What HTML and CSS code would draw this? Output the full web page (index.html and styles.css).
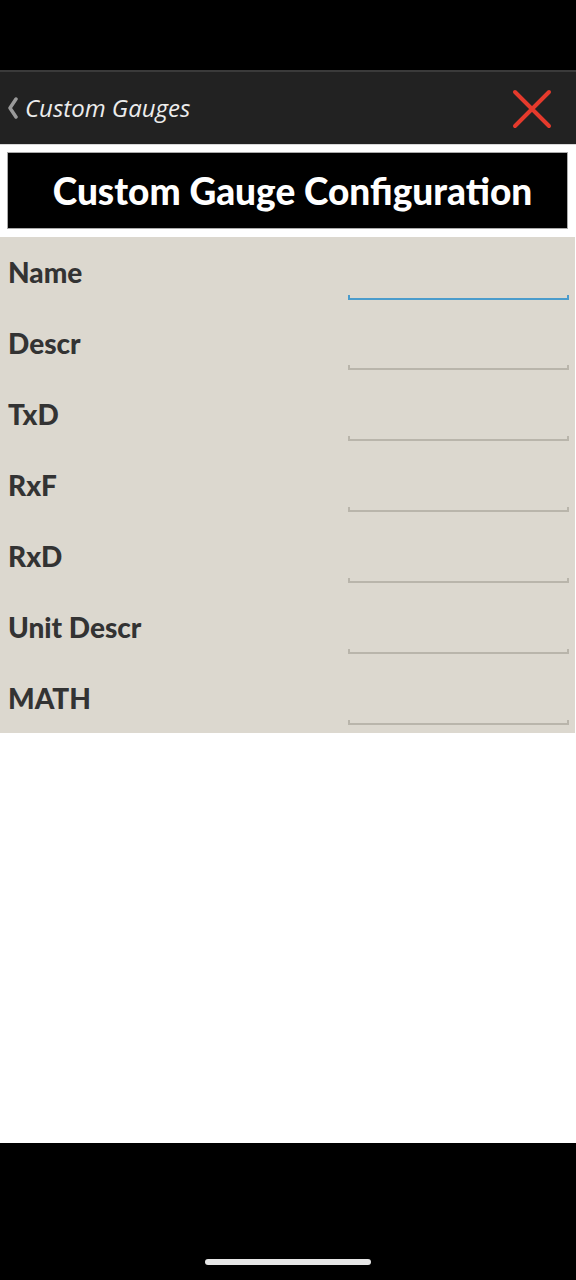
FILE: index.html
```html
<!DOCTYPE html>
<html lang="en">
<head>
  <meta charset="UTF-8">
  <meta name="viewport" content="width=device-width, initial-scale=1.0">
  <title>Custom Gauge Configuration</title>
  <link rel="stylesheet" href="styles.css">
</head>
<body>
  <div class="status-bar"></div>

  <!-- Nav bar -->
  <div class="nav">
    <div class="back">
      <svg class="chev" width="12" height="22" viewBox="0 0 12 22">
        <path d="M9 2 L3 11 L9 20" fill="none" stroke="#9a9a9a" stroke-width="3.5" stroke-linecap="round" stroke-linejoin="round"/>
      </svg>
      <span class="back-label">Custom Gauges</span>
    </div>
    <svg class="close" width="40" height="40" viewBox="0 0 40 40">
      <path d="M3 3 L37 37 M37 3 L3 37" stroke="#e53a2c" stroke-width="4" stroke-linecap="round"/>
    </svg>
  </div>

  <div class="title-wrap">
    <div class="title-box">Custom Gauge Configuration</div>
  </div>

  <!-- Fields -->
  <div class="form">
    <div class="row">
      <span class="label">Name</span>
      <div class="field active"></div>
    </div>
    <div class="row">
      <span class="label">Descr</span>
      <div class="field"></div>
    </div>
    <div class="row">
      <span class="label">TxD</span>
      <div class="field"></div>
    </div>
    <div class="row">
      <span class="label">RxF</span>
      <div class="field"></div>
    </div>
    <div class="row">
      <span class="label">RxD</span>
      <div class="field"></div>
    </div>
    <div class="row">
      <span class="label">Unit Descr</span>
      <div class="field"></div>
    </div>
    <div class="row">
      <span class="label">MATH</span>
      <div class="field"></div>
    </div>
  </div>

  <div class="blank"></div>

  <div class="bottom-bar">
    <div class="home-indicator"></div>
  </div>
</body>
</html>
```

FILE: styles.css
```css
body {
  margin: 0;
  width: 576px;
  height: 1280px;
  background-color: #fff;
  font-family: Lato, "Open Sans", sans-serif;
  display: flex;
  flex-direction: column;
}

.status-bar {
  height: 70px;
  background-color: #000;
}

.nav {
  height: 72px;
  background-color: #222;
  border-top: 2px solid #3a3a3a;
  display: flex;
  align-items: center;
  justify-content: space-between;
  padding: 0 24px 0 7px;
}

.back {
  display: flex;
  align-items: center;
  gap: 6px;
}

.back-label {
  color: #ececec;
  font-size: 24px;
  font-style: italic;
  font-family: "Open Sans", sans-serif;
  margin-top: -2px;
}

.close {
  margin-top: 1px;
}

.title-wrap {
  height: 93px;
  border-top: 1px solid #d8d8d8;
  box-sizing: border-box;
  padding: 7px 8px 8px 7px;
}

.title-box {
  height: 77px;
  background-color: #000;
  border: 1px solid #aaa;
  box-sizing: border-box;
  color: #fff;
  font-weight: 900;
  font-size: 37px;
  display: flex;
  align-items: center;
  justify-content: center;
  padding-left: 10px;
  letter-spacing: 0;
}

/* Form panel */
.form {
  background-color: #dcd8cf;
  width: 575px;
  height: 496px;
  box-sizing: border-box;
}

.row {
  height: 71px;
  display: flex;
  justify-content: space-between;
  padding: 0 6px 0 8px;
  box-sizing: border-box;
}

.label {
  color: #333;
  font-weight: 900;
  font-size: 28px;
  margin-top: 18px;
}

.field {
  width: 221px;
  height: 5px;
  margin-top: 57px;
  border: 2px solid #b9b5ab;
  border-top: none;
  box-sizing: border-box;
}

.row:first-child .field {
  margin-top: 58px;
}

.field.active {
  border-color: #4b9ccc;
}

.blank {
  height: 410px;
}

.bottom-bar {
  flex: 1;
  background-color: #000;
  display: flex;
  justify-content: center;
}

.home-indicator {
  width: 166px;
  height: 6px;
  border-radius: 3px;
  background-color: #e6e6e6;
  margin-top: 116px;
}
```
